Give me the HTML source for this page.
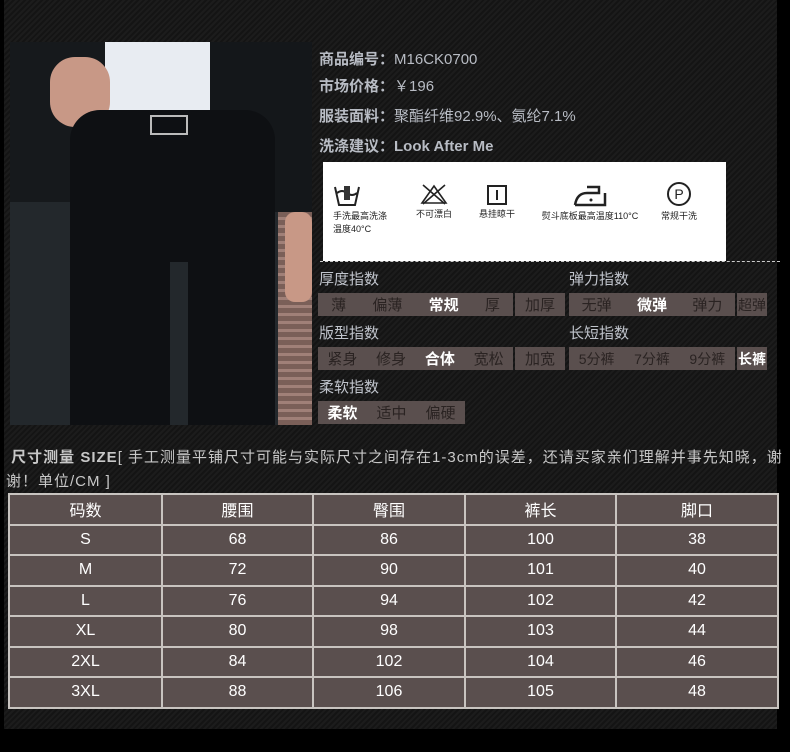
<!DOCTYPE html><html><head><meta charset="utf-8"><style>
*{margin:0;padding:0;box-sizing:border-box}
body{width:790px;height:752px;background:#000;position:relative;overflow:hidden;font-family:"Liberation Sans","Noto Sans CJK SC",sans-serif}
.bg{position:absolute;left:4px;top:0;width:773px;height:729px;background:repeating-linear-gradient(135deg,#1c1c1c 0 2px,#141414 2px 4px)}
.a{position:absolute}
.info{color:#b8bcc4;font-size:15px;font-weight:bold;left:319px}
.info span{font-weight:normal}
.lbl{color:#c0c4cc;font-size:15px;left:319px}
.box{position:absolute;background:#5a4f4e;height:23px;display:flex;align-items:center;justify-content:space-around;color:#2a2322;font-size:15px}
.box b{color:#fff}
table{position:absolute;left:8px;top:493px;width:769px;border-collapse:collapse;background:#5a4f4e;table-layout:fixed}
td{border:2px solid #c8c4c0;height:30.5px;text-align:center;color:#fff;font-size:16px}
.ic{position:absolute;font-size:9px;color:#222;text-align:center}
</style></head><body>
<div class="bg"></div>
<div class="a" style="left:10px;top:42px;width:302px;height:383px;background:#23282c;overflow:hidden">
<div class="a" style="left:268px;top:170px;width:34px;height:213px;background:repeating-linear-gradient(180deg,#7a5f58 0 5px,#a08078 5px 8px)"></div>
<div class="a" style="left:85px;top:0;width:130px;height:80px;background:#e8ecf2"></div>
<div class="a" style="left:0;top:0;width:95px;height:160px;background:#16191c"></div>
<div class="a" style="left:200px;top:0;width:102px;height:170px;background:#14171a"></div>
<div class="a" style="left:40px;top:15px;width:60px;height:70px;background:#c89886;border-radius:25px"></div>
<div class="a" style="left:60px;top:68px;width:205px;height:315px;background:#0e1013;border-radius:30px 30px 0 0"></div>
<div class="a" style="left:160px;top:220px;width:18px;height:163px;background:#23282c"></div>
<div class="a" style="left:140px;top:73px;width:38px;height:20px;border:2px solid #bbb"></div>
<div class="a" style="left:275px;top:170px;width:27px;height:90px;background:#c89886;border-radius:10px"></div>
</div>
<div class="a info" style="top:48px">商品编号：<span>M16CK0700</span></div>
<div class="a info" style="top:75px">市场价格：<span>￥196</span></div>
<div class="a info" style="top:105px">服装面料：<span>聚酯纤维92.9%、氨纶7.1%</span></div>
<div class="a info" style="top:135px">洗涤建议：Look After Me</div>
<div class="a" style="left:323px;top:162px;width:403px;height:99px;background:#fff"></div>
<div class="a" style="left:320px;top:261px;width:460px;border-top:1px dashed #ccc"></div>
<div class="ic" style="left:333px;top:183px;text-align:left;width:70px"><svg width="28" height="24" viewBox="0 0 28 24"><path d="M2 4 L6 22 H22 L26 4 M4 10 Q9 6 14 10 Q19 14 24 10" stroke="#222" stroke-width="2" fill="none"/><rect x="11" y="3" width="6" height="14" fill="#333"/></svg><br>手洗最高洗涤<br>温度40°C</div>
<div class="ic" style="left:412px;top:183px;width:44px"><svg width="30" height="22"><path d="M3 20 L15 3 L27 20 Z M4 2 L26 21 M26 2 L4 21" stroke="#222" stroke-width="1.6" fill="none"/></svg><br>不可漂白</div>
<div class="ic" style="left:475px;top:185px;width:44px"><svg width="20" height="20"><rect x="1" y="1" width="18" height="18" stroke="#222" stroke-width="2" fill="none"/><path d="M10 5V15" stroke="#222" stroke-width="2"/></svg><br>悬挂晾干</div>
<div class="ic" style="left:535px;top:183px;width:110px"><svg width="34" height="24"><path d="M2 22 Q4 10 14 10 H26 V4 H14 M2 22 H32 V10" stroke="#222" stroke-width="2.5" fill="none"/><circle cx="18" cy="17" r="1.5" fill="#222"/></svg><br>熨斗底板最高温度110°C</div>
<div class="ic" style="left:655px;top:181px;width:48px"><svg width="26" height="26"><circle cx="13" cy="13" r="11" stroke="#222" stroke-width="2" fill="none"/><text x="13" y="18" font-size="14" text-anchor="middle" font-family="Liberation Sans" fill="#222">P</text></svg><br>常规干洗</div>
<div class="a lbl" style="top:268px">厚度指数</div><div class="a lbl" style="left:569px;top:268px">弹力指数</div>
<div class="box" style="left:318px;top:293px;width:195px"><span>薄</span><span>偏薄</span><b>常规</b><span>厚</span></div>
<div class="box" style="left:515px;top:293px;width:50px">加厚</div>
<div class="box" style="left:569px;top:293px;width:166px"><span>无弹</span><b>微弹</b><span>弹力</span></div>
<div class="box" style="left:737px;top:293px;width:30px;font-size:14px">超弹</div>
<div class="a lbl" style="top:322px">版型指数</div><div class="a lbl" style="left:569px;top:322px">长短指数</div>
<div class="box" style="left:318px;top:347px;width:195px"><span>紧身</span><span>修身</span><b>合体</b><span>宽松</span></div>
<div class="box" style="left:515px;top:347px;width:50px">加宽</div>
<div class="box" style="left:569px;top:347px;width:166px;font-size:14px"><span>5分裤</span><span>7分裤</span><span>9分裤</span></div>
<div class="box" style="left:737px;top:347px;width:30px;font-size:14px"><b>长裤</b></div>
<div class="a lbl" style="top:376px">柔软指数</div>
<div class="box" style="left:318px;top:401px;width:147px"><b>柔软</b><span>适中</span><span>偏硬</span></div>
<div class="a" style="left:6px;top:446px;width:784px;color:#c8c8c8;font-size:15px;line-height:24px;letter-spacing:1px;white-space:nowrap">&nbsp;<b>尺寸测量 SIZE</b>[ 手工测量平铺尺寸可能与实际尺寸之间存在1-3cm的误差，还请买家亲们理解并事先知晓，谢<br>谢！单位/CM ]</div>
<table>
<colgroup><col style="width:153px"><col style="width:151px"><col style="width:152px"><col style="width:151px"><col style="width:162px"></colgroup>
<tr><td>码数</td><td>腰围</td><td>臀围</td><td>裤长</td><td>脚口</td></tr>
<tr><td>S</td><td>68</td><td>86</td><td>100</td><td>38</td></tr>
<tr><td>M</td><td>72</td><td>90</td><td>101</td><td>40</td></tr>
<tr><td>L</td><td>76</td><td>94</td><td>102</td><td>42</td></tr>
<tr><td>XL</td><td>80</td><td>98</td><td>103</td><td>44</td></tr>
<tr><td>2XL</td><td>84</td><td>102</td><td>104</td><td>46</td></tr>
<tr><td>3XL</td><td>88</td><td>106</td><td>105</td><td>48</td></tr>
</table>
</body></html>
